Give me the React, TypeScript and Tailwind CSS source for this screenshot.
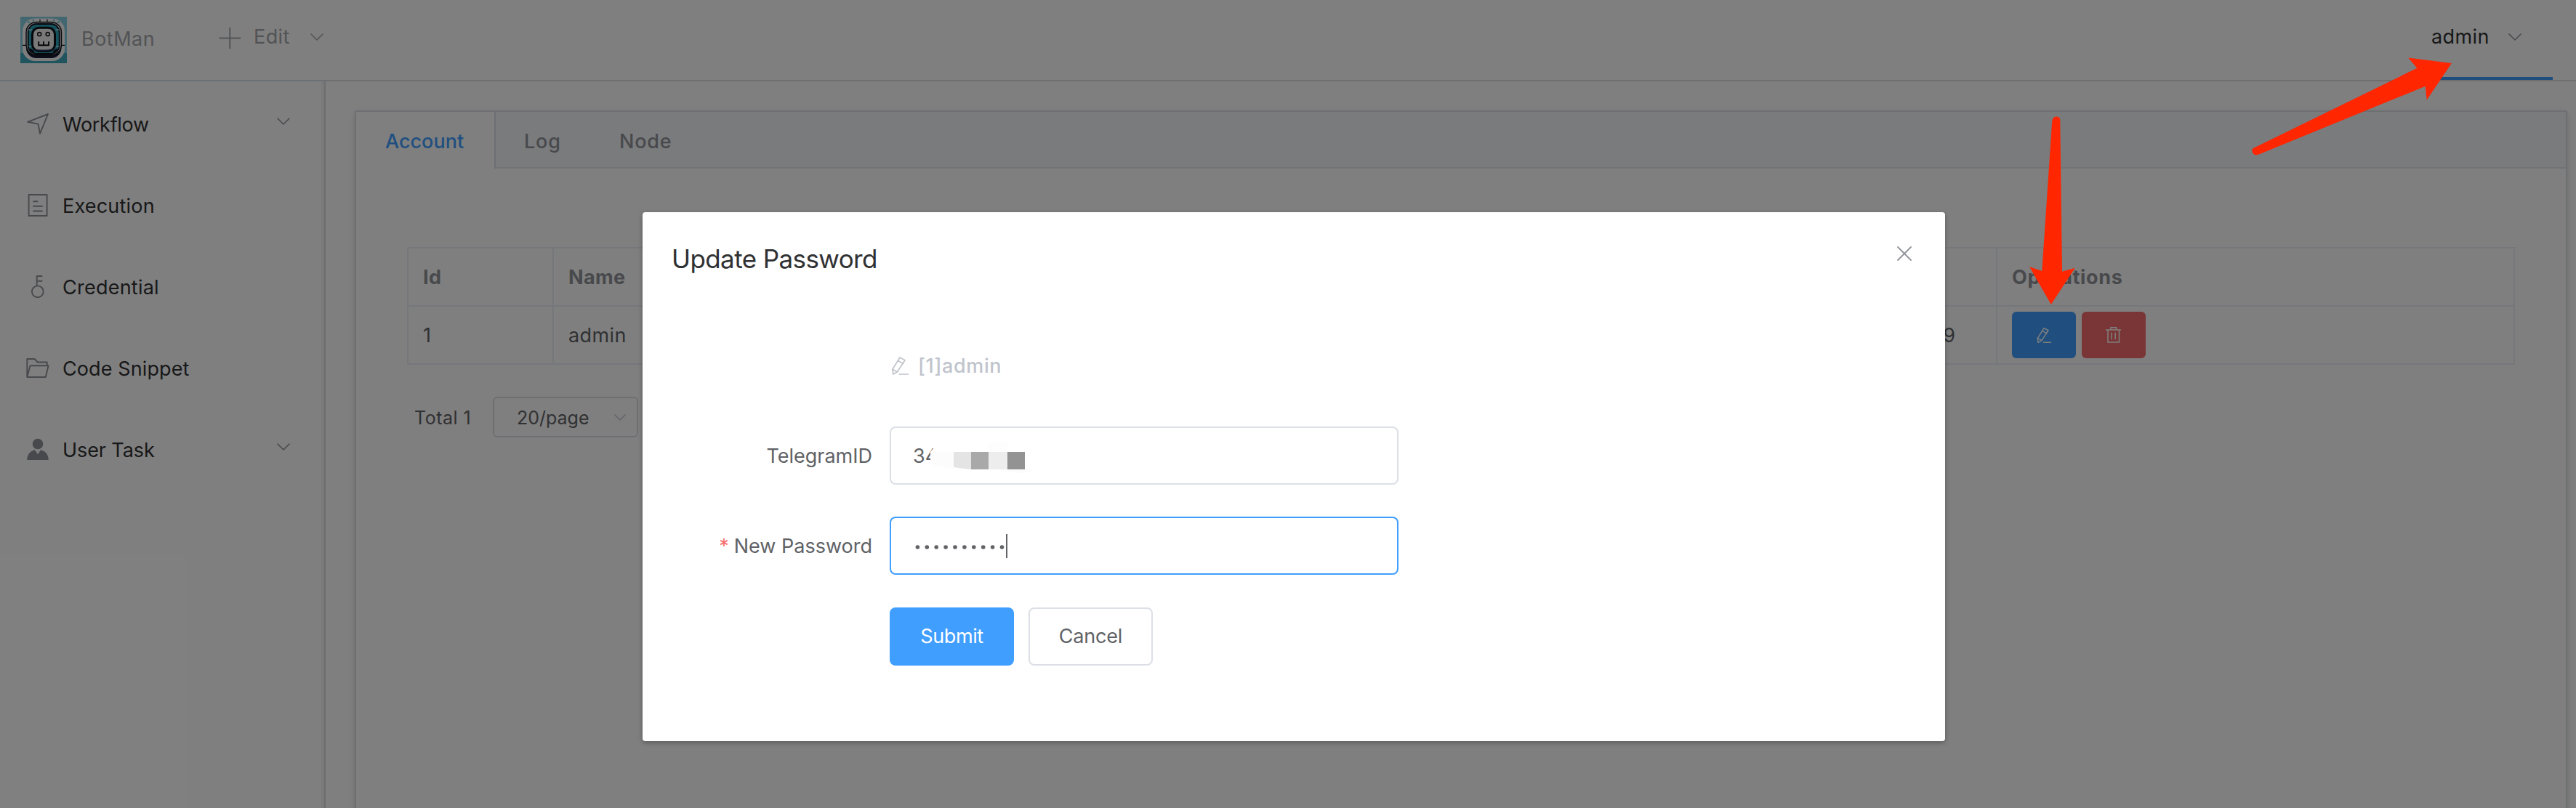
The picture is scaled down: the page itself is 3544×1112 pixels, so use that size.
import type { ReactNode } from "react";

function Chevron({ className = "", width = 18 }: { className?: string; width?: number }) {
  return (
    <svg className={className} width={width} height={width / 2 + 1} viewBox="0 0 18 10" fill="none" stroke="currentColor" strokeWidth="1.6" strokeLinecap="round" strokeLinejoin="round">
      <path d="M1 1 L9 9 L17 1" />
    </svg>
  );
}

function MenuIcon({ children }: { children: ReactNode }) {
  return (
    <svg className="mt-1 h-8 w-8 shrink-0 text-[#909399]" viewBox="0 0 32 32" fill="none" stroke="currentColor" strokeWidth="1.9" strokeLinejoin="round" strokeLinecap="round">
      {children}
    </svg>
  );
}

function EditIcon({ className = "" }: { className?: string }) {
  return (
    <svg className={className} viewBox="0 0 28 28" fill="none" stroke="currentColor" strokeWidth="1.7" strokeLinejoin="round" strokeLinecap="round">
      <path d="M14 3 L21 6.7 L10.5 22.7 L4.8 26 L3.8 19.3 Z" />
      <path d="M11.5 7.5 L18.5 11.3 M3.8 19.3 L10.5 22.7 M13.5 26 H25.2" />
    </svg>
  );
}

function TrashIcon({ className = "" }: { className?: string }) {
  return (
    <svg className={className} viewBox="0 0 24 24" fill="none" stroke="currentColor" strokeWidth="1.5">
      <path d="M1 5 H22 M8 5 V1.7 H15.5 V5 M4 5 V22 H19.5 V5 M9 8.7 V18 M14.2 8.7 V18" />
    </svg>
  );
}

function Logo() {
  return (
    <svg className="h-16 w-16" viewBox="0 0 64 64">
      <rect width="64" height="64" fill="#86cfe0" />
      <rect y="50" width="64" height="14" fill="#41a9bf" />
      <rect x="3" y="2.5" width="58" height="58.5" rx="17" fill="#fbfbfb" />
      <g fill="#7cc8da">
        <circle cx="11.5" cy="7.5" r="1.6" />
        <circle cx="18" cy="5" r="1.5" />
        <circle cx="46" cy="5" r="1.5" />
        <circle cx="52.5" cy="7.5" r="1.6" />
      </g>
      <path d="M27 3.5 V8 M37 3.5 V8 M3 39.3 H9 M55 39.3 H61" stroke="#151515" strokeWidth="1.2" />
      <rect x="8" y="9" width="48.5" height="48" rx="14" fill="#141b2e" />
      <rect x="8" y="7.5" width="48.5" height="45" rx="14" fill="#e4eef0" stroke="#10131c" strokeWidth="1.4" />
      <rect x="10.7" y="10" width="43" height="41" rx="11.5" fill="#2aa3b8" stroke="#10131c" strokeWidth="1.8" />
      <path d="M11 18 H16 M48.5 18 H53.5" stroke="#dff" strokeWidth="1" />
      <path d="M11.5 41 H53" stroke="#dff" strokeWidth="1" />
      <path d="M14 45 L18 48 M50 45 L46 48" stroke="#10131c" strokeWidth="2.4" strokeLinecap="round" />
      <rect x="16.5" y="15.2" width="31" height="32" rx="9" fill="#f2f2f2" stroke="#0c1018" strokeWidth="3" />
      <path d="M20 45.5 Q32 47.8 44 45" stroke="#24305a" strokeWidth="1.4" fill="none" />
      <circle cx="26.2" cy="24" r="2.5" fill="none" stroke="#111" strokeWidth="1.5" />
      <circle cx="37.7" cy="24" r="2.5" fill="none" stroke="#111" strokeWidth="1.5" />
      <path d="M25.2 34 V39.2 H39 V34 M32 34 V39.2" fill="none" stroke="#111" strokeWidth="1.9" />
    </svg>
  );
}

function MenuItem({ label, icon, expandable, tracking = "" }: { label: string; icon: ReactNode; expandable?: boolean; tracking?: string }) {
  return (
    <li className="flex h-28 items-center pl-9 pr-[43px]">
      <MenuIcon>{icon}</MenuIcon>
      <span className={`ml-[18px] mt-2 flex-1 text-[#303133] ${tracking}`}>{label}</span>
      {expandable && <Chevron className="-mt-[3px] text-[#909399]" />}
    </li>
  );
}

function Cell({ children, className = "" }: { children?: ReactNode; className?: string }) {
  return <div className={`flex items-center border-b-2 border-r-2 border-[#ebeef5] px-5 ${className}`}>{children}</div>;
}

function FormRow({ label, required, children }: { label?: string; required?: boolean; children: ReactNode }) {
  return (
    <div className="flex h-20 items-center">
      <div className="flex w-[340px] justify-end pr-6 pt-0.5">
        {required && <span className="mr-[7px] text-[#f56c6c]">*</span>}
        {label}
      </div>
      {children}
    </div>
  );
}

function Header() {
  return (
    <header className="flex h-28">
      <div className="flex w-[448px] border-b-2 border-[#d6e1e8] pl-7 text-[#a4a6ab]">
        <div className="mt-[23px]">
          <Logo />
        </div>
        <span className="ml-5 mt-[34px] w-[189px] tracking-[0.5px]">BotMan</span>
        <svg className="mt-[37px] h-[31px] w-[31px]" viewBox="0 0 31 31" stroke="currentColor" strokeWidth="2" strokeLinecap="round">
          <path d="M1.3 15.5 H29.3 M15.3 1.5 V29.5" />
        </svg>
        <span className="ml-[17px] mt-[31px] w-[78px] tracking-[0.4px]">Edit</span>
        <Chevron className="mt-[46px]" />
      </div>
      <div className="flex flex-1 justify-end border-b-2 border-[#dedede] pr-8">
        <div className="flex w-[206px] border-b-4 border-[#409eff] pl-[39px] text-[#303133]">
          <span className="mt-[31px] w-[106px] tracking-[0.4px]">admin</span>
          <Chevron className="mt-[46px] text-[#909399]" />
        </div>
      </div>
    </header>
  );
}

function Sidebar() {
  return (
    <aside className="flex w-[448px] border-r-2 border-[#dadada]">
      <ul className="w-[442px]">
        <MenuItem label="Workflow" tracking="tracking-[-0.3px]" expandable icon={<path d="M30 3 L2 13.8 L16.5 16.6 L19 29.8 Z" />} />
        <MenuItem
          label="Execution"
          tracking="tracking-[0.2px]"
          icon={
            <>
              <rect x="3.6" y="2" width="25" height="29" />
              <path d="M10 11.2 H15.5 M10 17.8 H22 M10 24.5 H22" />
            </>
          }
        />
        <MenuItem
          label="Credential"
          tracking="tracking-[0.24px]"
          icon={
            <>
              <circle cx="15.8" cy="23.3" r="7.9" />
              <path d="M14.7 15 V2 H21.6 M14.7 8.7 H21.6" />
            </>
          }
        />
        <MenuItem
          label="Code Snippet"
          tracking="tracking-[0.1px]"
          icon={<path d="M1.3 29 V4 H11.7 L15.7 8.5 H28.7 V13 M5.5 13.3 H30.6 L26.8 29 H1.3 Z" />}
        />
        <MenuItem
          label="User Task"
          tracking="tracking-[-0.1px]"
          expandable
          icon={
            <g fill="currentColor" stroke="none">
              <circle cx="16" cy="9" r="7.3" />
              <path d="M1.2 31 C1.4 23.5 5.5 18.5 11.9 17.2 L16 23.3 L20.1 17.2 C26.5 18.5 30.6 23.5 30.8 31 Z" />
            </g>
          }
        />
      </ul>
      <div className="w-1 bg-[#f4f4f4]" />
    </aside>
  );
}

function Tabs() {
  return (
    <nav className="flex h-[78px] border-b-2 border-[#e4e7ed] bg-[#f5f7fa] font-medium text-[#909399]">
      <div className="-mb-0.5 flex w-48 items-center border-r-2 border-[#dcdfe6] bg-white pb-0.5 pl-10 pt-1.5 text-[#409eff]">Account</div>
      <div className="flex w-[130px] items-center pl-[39px] pt-1.5 tracking-[0.8px]">Log</div>
      <div className="flex w-[150px] items-center pl-10 pt-1.5 tracking-[0.8px]">Node</div>
    </nav>
  );
}

function AccountTable() {
  return (
    <div className="grid grid-cols-[200px_238px_1748px_712px] grid-rows-[80px_80px] border-l-2 border-t-2 border-[#ebeef5] text-[#606266]">
      <Cell className="pt-0.5 font-bold tracking-[0.5px] text-[#909399]">Id</Cell>
      <Cell className="pt-0.5 font-bold tracking-[0.4px] text-[#909399]">Name</Cell>
      <Cell />
      <Cell className="pt-0.5 font-bold tracking-[0.65px] text-[#909399]">Operations</Cell>
      <Cell className="pt-0.5">1</Cell>
      <Cell className="pt-0.5 tracking-[0.4px]">admin</Cell>
      <Cell className="justify-end pr-[56px] pt-0.5">9</Cell>
      <Cell className="gap-2">
        <button className="flex h-16 w-[88px] items-center justify-center rounded-md bg-[#409eff] text-white">
          <EditIcon className="h-6 w-6" />
        </button>
        <button className="flex h-16 w-[88px] items-center justify-center rounded-md bg-[#f56c6c] text-white">
          <TrashIcon className="h-6 w-6" />
        </button>
      </Cell>
    </div>
  );
}

function Pagination() {
  return (
    <div className="mt-11 flex items-center pl-[10px] text-[25px] leading-[30px] text-[#606266]">
      <span className="w-[108px] pt-0.5 tracking-[0.5px]">Total 1</span>
      <div className="flex h-14 w-[200px] items-center justify-between rounded-md border-2 border-[#dcdfe6] pl-[31px] pr-[15px]">
        <span className="pt-0.5">20/page</span>
        <Chevron className="text-[#c0c4cc]" width={16} />
      </div>
    </div>
  );
}

function MaskedId() {
  return (
    <svg className="absolute left-[52px] top-3.5 h-12 w-40" viewBox="0 0 160 48">
      <path d="M2 19 L8 12 H160 V48 H2 Z" fill="#ffffff" />
      <path d="M2 22 Q4 19 9 19 H34 V43 Q10 39 2 35 Z" fill="#fcfcfc" />
      <path d="M34 19 H58 V43 Q46 42 34 40 Z" fill="#e4e4e4" />
      <rect x="82" y="6" width="26" height="13" fill="#fdfdfd" />
      <rect x="58" y="19" width="24" height="24" fill="#a9a9a9" />
      <rect x="82" y="19" width="26" height="24" fill="#ededed" />
      <rect x="108" y="19" width="24" height="24" fill="#939393" />
      <path d="M90 43 H142 Q140 48 128 48 Q104 47 90 43 Z" fill="#fcfcfc" />
    </svg>
  );
}

function PasswordDots() {
  return (
    <svg className="h-9 w-[130px]" viewBox="0 0 130 36" fill="#606266">
      {Array.from({ length: 10 }, (_, i) => (
        <circle key={i} cx={6.4 + i * 12.9} cy="20" r="2.8" />
      ))}
    </svg>
  );
}

function Dialog() {
  return (
    <section className="h-[728px] w-[1792px] rounded bg-white text-[#606266] shadow-[0_2px_6px_rgba(0,0,0,0.3)]">
      <div className="flex justify-between pl-10 pr-[46px]">
        <h2 className="mt-[43px] text-[35px] leading-[42px] tracking-[-0.6px] text-[#303133]">Update Password</h2>
        <svg className="mt-[47px] h-5 w-5" viewBox="0 0 20 20" stroke="#909399" strokeWidth="1.8" strokeLinecap="round">
          <path d="M1 1 L19 19 M19 1 L1 19" />
        </svg>
      </div>
      <form className="mt-[86px] flex flex-col gap-11">
        <FormRow>
          <span className="flex items-center font-medium tracking-[0.6px] text-[#c0c4cc]">
            <EditIcon className="mr-[11px] h-7 w-7" />
            <span className="pt-0.5">[1]admin</span>
          </span>
        </FormRow>
        <FormRow label="TelegramID">
          <div className="relative flex h-20 w-[700px] items-center rounded-lg border-2 border-[#dcdfe6] pl-[30px] pt-0.5">
            34
            <MaskedId />
          </div>
        </FormRow>
        <FormRow label="New Password" required>
          <div className="flex h-20 w-[700px] items-center rounded-lg border-2 border-[#409eff] pl-[30px]">
            <PasswordDots />
            <span className="-ml-0.5 h-[33px] w-0.5 bg-[#606266]" />
          </div>
        </FormRow>
        <FormRow>
          <div className="mt-px flex gap-5">
            <button type="button" className="h-20 w-[171px] rounded-lg bg-[#409eff] tracking-[-0.4px] text-white">
              Submit
            </button>
            <button type="button" className="h-20 w-[171px] rounded-lg border-2 border-[#dcdfe6] tracking-[-0.2px]">
              Cancel
            </button>
          </div>
        </FormRow>
      </form>
    </section>
  );
}

function Arrows() {
  return (
    <svg className="pointer-events-none absolute inset-0 h-full w-full" viewBox="0 0 3544 1112" fill="#ff2600">
      <path d="M2823.2 167 Q2824 160.7 2829 160.5 Q2834.3 160.5 2834.3 165 L2837 373.7 L2854.8 368.7 L2821.8 419 L2792 367 L2809.3 373 Z" />
      <path d="M3100 204 L3325.3 93.7 L3313.3 79.5 L3372.8 87 L3338.7 137.5 L3336.7 118.7 L3108.3 212.3 Q3101.5 214.5 3099.5 211 Q3097 206 3100 204 Z" />
    </svg>
  );
}

export default function App() {
  return (
    <div className="relative h-[1112px] w-[3544px] overflow-hidden bg-white font-['Inter',sans-serif] text-[27px] leading-[40px]">
      <Header />
      <div className="flex h-[1000px]">
        <Sidebar />
        <main className="flex-1 pl-10 pr-3 pt-10">
          <div className="h-[1100px] border-2 border-[#dcdfe6] bg-white shadow-[0_4px_8px_rgba(0,0,0,0.12),0_0_12px_rgba(0,0,0,0.04)]">
            <Tabs />
            <div className="pl-[70px] pr-[68px] pt-[108px]">
              <AccountTable />
              <Pagination />
            </div>
          </div>
        </main>
      </div>
      <div className="absolute inset-0 flex items-start justify-center bg-black/50 pl-4 pt-[292px]">
        <Dialog />
      </div>
      <Arrows />
    </div>
  );
}
